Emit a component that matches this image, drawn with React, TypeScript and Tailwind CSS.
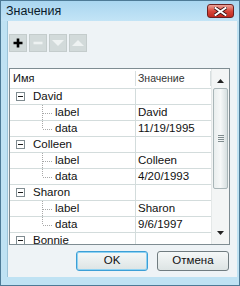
import React from "react";

type Row = { kind: "parent" | "child"; name: string; value: string; last?: boolean };

const rows: Row[] = [
  { kind: "parent", name: "David", value: "" },
  { kind: "child", name: "label", value: "David" },
  { kind: "child", name: "data", value: "11/19/1995", last: true },
  { kind: "parent", name: "Colleen", value: "" },
  { kind: "child", name: "label", value: "Colleen" },
  { kind: "child", name: "data", value: "4/20/1993", last: true },
  { kind: "parent", name: "Sharon", value: "" },
  { kind: "child", name: "label", value: "Sharon" },
  { kind: "child", name: "data", value: "9/6/1997", last: true },
  { kind: "parent", name: "Bonnie", value: "" },
];

function MinusBox() {
  return (
    <svg width="9" height="9" viewBox="0 0 9 9" className="shrink-0">
      <rect x="0.5" y="0.5" width="8" height="8" fill="#fff" stroke="#7f8b90" />
      <line x1="2" y1="4.5" x2="7" y2="4.5" stroke="#1a1a1a" />
    </svg>
  );
}

function Connector({ last }: { last?: boolean }) {
  return (
    <svg width="12" height="16" viewBox="0 0 12 16" className="shrink-0">
      <line x1="0.5" y1="0" x2="0.5" y2={last ? 8 : 16} stroke="#a8a8a8" strokeDasharray="1 1" />
      <line x1="1" y1="8.5" x2="11" y2="8.5" stroke="#a8a8a8" strokeDasharray="1 1" />
    </svg>
  );
}

export default function App() {
  const font = { fontFamily: '"Liberation Sans", Arial, sans-serif' };
  return (
    <div
      className="w-[240px] h-[286px] flex flex-col bg-[#bfe2f3] border border-[#4d7a96] overflow-hidden"
      style={font}
    >
      {/* title bar */}
      <div className="h-[20px] shrink-0 flex items-center justify-between pl-[5px] pr-[5px] bg-gradient-to-b from-[#a9d6f0] to-[#c3e4f6]">
        <span className="text-[12.5px] text-[#0b1a2a] leading-none">Значения</span>
        <div className="w-[27px] h-[14px] rounded-[3px] border border-[#6b2020] bg-gradient-to-b from-[#e9a39a] via-[#d8473a] to-[#c0271d] flex items-center justify-center">
          <svg width="13" height="9" viewBox="0 0 13 9">
            <path d="M1.5 1 L11.5 8 M11.5 1 L1.5 8" stroke="#3a1010" strokeWidth="3.6" strokeLinecap="square" />
            <path d="M1.5 1 L11.5 8 M11.5 1 L1.5 8" stroke="#ffffff" strokeWidth="2" strokeLinecap="square" />
          </svg>
        </div>
      </div>

      {/* client area */}
      <div className="flex-1 ml-[6px] mr-[2px] mb-[8px] bg-[#eef3f6] border-l border-[#9cc4d8] flex flex-col pl-[1px]">
        {/* toolbar */}
        <div className="flex gap-[2px] pt-[13px] h-[47px]">
          <div className="w-[18px] h-[18px] bg-[#d2dada] border border-[#c4cccc] flex items-center justify-center">
            <svg width="10" height="10" viewBox="0 0 10 10">
              <path d="M5 0.5 V9.5 M0.5 5 H9.5" stroke="#000" strokeWidth="2.6" />
            </svg>
          </div>
          <div className="w-[18px] h-[18px] bg-[#d2dada] border border-[#c4cccc] flex items-center justify-center">
            <svg width="10" height="10" viewBox="0 0 10 10">
              <path d="M0.5 5 H9.5" stroke="#eef2f2" strokeWidth="2.6" />
            </svg>
          </div>
          <div className="w-[18px] h-[18px] bg-[#d2dada] border border-[#c4cccc] flex items-center justify-center">
            <svg width="12" height="8" viewBox="0 0 12 8">
              <path d="M0 1 H12 L6 7 Z" fill="#eef2f2" />
            </svg>
          </div>
          <div className="w-[18px] h-[18px] bg-[#d2dada] border border-[#c4cccc] flex items-center justify-center">
            <svg width="12" height="8" viewBox="0 0 12 8">
              <path d="M0 7 H12 L6 1 Z" fill="#eef2f2" />
            </svg>
          </div>
        </div>

        {/* list */}
        <div className="w-[221px] h-[177px] border border-[#7e8c92] bg-white flex overflow-hidden">
          <div className="w-[201px] flex flex-col">
            {/* header */}
            <div className="h-[20px] shrink-0 flex items-center border-b border-[#d3dcdc] text-[11px] text-[#111]">
              <div className="w-[125px] pl-[3px]">Имя</div>
              <div className="w-px h-[15px] bg-[#d8dfe0]" />
              <div className="w-[74px] pl-[2px] text-[#333] text-[10.5px]">Значение</div>
              <div className="w-px h-[15px] bg-[#d8dfe0]" />
            </div>
            {rows.map((r, i) => (
              <div key={i} className="h-[16px] shrink-0 flex border-b border-[#d3dcdc] text-[11.5px] text-[#111]">
                <div className="w-[125px] flex items-center">
                  {r.kind === "parent" ? (
                    <>
                      <div className="w-[6px]" />
                      <MinusBox />
                      <span className="ml-[8px]">{r.name}</span>
                    </>
                  ) : (
                    <>
                      <div className="w-[32px]" />
                      <Connector last={r.last} />
                      <span className="ml-[1px]">{r.name}</span>
                    </>
                  )}
                </div>
                <div className="w-px bg-[#d3dcdc]" />
                <div className="w-[75px] pl-[2px] flex items-center">{r.value}</div>
              </div>
            ))}
          </div>
          {/* scrollbar */}
          <div className="w-[18px] flex flex-col items-center bg-[#f3f5f5] border-l border-[#e4e8e8]">
            <div className="h-[19px] flex items-end justify-center pb-[5px]">
              <svg width="7" height="4" viewBox="0 0 7 4">
                <path d="M0 4 H7 L3.5 0 Z" fill="#222" />
              </svg>
            </div>
            <div className="w-[15px] h-[101px] rounded-[2px] border border-[#a9b6b8] bg-gradient-to-r from-[#e9eeee] via-[#f6f8f8] to-[#d7dfe0] flex flex-col items-center justify-center gap-[1px]">
              <div className="w-[6px] h-px bg-[#7f8c8e]" />
              <div className="w-[6px] h-px bg-[#7f8c8e]" />
              <div className="w-[6px] h-px bg-[#7f8c8e]" />
              <div className="w-[6px] h-px bg-[#7f8c8e]" />
            </div>
            <div className="flex-1 flex items-end justify-center pb-[9px]">
              <svg width="7" height="4" viewBox="0 0 7 4">
                <path d="M0 0 H7 L3.5 4 Z" fill="#222" />
              </svg>
            </div>
          </div>
        </div>

        {/* buttons */}
        <div className="flex gap-[9px] mt-[6px] pl-[67px]">
          <div className="w-[72px] h-[20px] rounded-[3px] border border-[#3c9fd6] shadow-[inset_0_0_0_1px_#8fd2f2] bg-gradient-to-b from-[#f5f8f8] to-[#dde4e4] flex items-center justify-center text-[11.5px] text-[#111]">
            OK
          </div>
          <div className="w-[72px] h-[20px] rounded-[3px] border border-[#707c80] bg-gradient-to-b from-[#f5f8f8] to-[#dde4e4] flex items-center justify-center text-[11.5px] text-[#111]">
            Отмена
          </div>
        </div>
      </div>
    </div>
  );
}
